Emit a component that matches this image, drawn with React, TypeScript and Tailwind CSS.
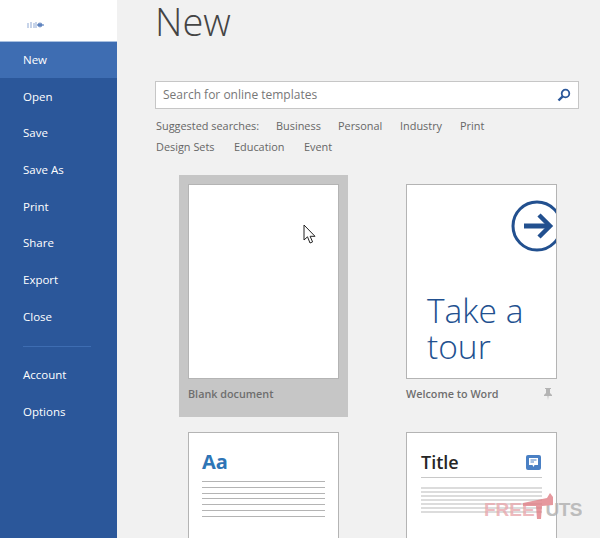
import React from 'react';

const font = "font-['Open_Sans','Noto_Sans',sans-serif]";

const topItems = ['Open', 'Save', 'Save As', 'Print', 'Share', 'Export', 'Close'];
const bottomItems = ['Account', 'Options'];

const Sidebar: React.FC = () => (
  <aside className="w-[117px] shrink-0 bg-[#2b579a] text-white text-[11.5px]">
    <div className="h-[42px] bg-white border-b border-[#a9c0e0] flex items-center pl-[27px] pt-[8px]">
      <svg width="18" height="8" viewBox="0 0 18 8">
        <path d="M1 2v5M4 1v6M7 2v5M9 1v6" stroke="#8fa9d4" strokeWidth="1" />
        <circle cx="13" cy="4" r="2.4" fill="#7f9bcb" />
        <path d="M10 4h7" stroke="#3e6db2" strokeWidth="1" />
      </svg>
    </div>
    <div className="h-[36px] bg-[#3e6db2] flex items-center pl-[23px]">New</div>
    {topItems.map((item) => (
      <div key={item} className="h-[36.67px] flex items-center pl-[23px]">
        {item}
      </div>
    ))}
    <div className="h-px bg-[#3e6db2] ml-[23px] w-[68px] mt-[11px] mb-[10px]" />
    {bottomItems.map((item) => (
      <div key={item} className="h-[36.67px] flex items-center pl-[23px]">
        {item}
      </div>
    ))}
  </aside>
);

const SearchIcon = () => (
  <svg width="14" height="14" viewBox="0 0 14 14" fill="none" stroke="#2b579a">
    <circle cx="8.5" cy="5.5" r="3.8" strokeWidth="1.8" />
    <path d="M5.7 8.3L1.5 12.5" strokeWidth="2.4" />
  </svg>
);

const PinIcon = () => (
  <svg width="10" height="12" viewBox="0 0 10 12" fill="#b4b4b4">
    <path d="M2 0h6v1H7v4l2 2v1H5.5L5 12l-.5-4H1V7l2-2V1H2z" />
  </svg>
);

const Cursor = () => (
  <svg className="absolute left-[114px] top-[39px]" width="14" height="21" viewBox="0 0 14 21">
    <path
      d="M1 1v15l3.5-3.2L7 19l2.6-1.1-2.5-5.6H12z"
      fill="white"
      stroke="#222"
      strokeWidth="1"
      strokeLinejoin="miter"
    />
  </svg>
);

const Sheet: React.FC<{ children?: React.ReactNode; className?: string }> = ({ children, className }) => (
  <div className={`relative w-[151px] bg-white border border-[#b4b4b4] overflow-hidden ${className ?? ''}`}>
    {children}
  </div>
);

const Watermark = () => (
  <div className="absolute left-[484px] top-[496px] w-[98px] flex justify-between opacity-80 font-['Liberation_Sans',sans-serif] font-bold text-[19px] leading-[28px]">
    <span className="text-[#e9a9ae]">FREE</span>
    <span className="text-[#b0b0b0] tracking-[-0.5px]">UTS</span>
    <svg className="absolute left-[39px] -top-[3px]" width="30" height="26" viewBox="0 0 30 26">
      <path d="M0 10L24 5l3-5 3 4v8l-11 1-1 13h-4l-1-13H0z" fill="#e07f86" />
    </svg>
  </div>
);

const App: React.FC = () => (
  <div className={`relative w-[600px] h-[538px] overflow-hidden flex bg-[#f1f1f1] ${font}`}>
    <Sidebar />
    <main className="flex-1 pl-[38px] min-w-0">
      <h1 className="font-light text-[38px] leading-[42px] text-[#444444] h-[81px]">New</h1>
      <div className="w-[424px] h-[28px] bg-white border border-[#c6c6c6] flex items-center justify-between pl-[7px] pr-[7px] text-[12px] text-[#777777]">
        <span>Search for online templates</span>
        <SearchIcon />
      </div>
      <div className="mt-[6px] ml-[1px] text-[10.9px] text-[#666666] leading-[21px]">
        <div className="flex">
          <span className="w-[120px]">Suggested searches:</span>
          <span className="w-[62px]">Business</span>
          <span className="w-[62px]">Personal</span>
          <span className="w-[60px]">Industry</span>
          <span>Print</span>
        </div>
        <div className="flex">
          <span className="w-[78px]">Design Sets</span>
          <span className="w-[70px]">Education</span>
          <span>Event</span>
        </div>
      </div>
      <div className="mt-[18px] ml-[24px] grid grid-cols-[169px_169px] gap-x-[49px] gap-y-[6px] text-[10.8px] font-semibold text-[#6e6e6e]">
        <div className="relative h-[242px] bg-[#c6c6c6] p-[9px]">
          <Sheet className="h-[195px]">
            <Cursor />
          </Sheet>
          <div className="mt-[7px]">Blank document</div>
        </div>
        <div className="h-[242px] p-[9px]">
          <Sheet className="h-[195px]">
            <svg className="absolute left-[104px] top-[15px]" width="50" height="52" viewBox="0 0 50 52" fill="none" stroke="#22508f">
              <circle cx="26" cy="26" r="24" strokeWidth="3" />
              <path d="M13 26h26" strokeWidth="5" />
              <path d="M28 15l11 11-11 11" strokeWidth="4.5" />
            </svg>
            <div className="absolute left-[20px] top-[108px] font-light text-[33.5px] leading-[35.5px] text-[#22508f] whitespace-nowrap">
              Take a
              <br />
              tour
            </div>
          </Sheet>
          <div className="mt-[7px] flex items-center justify-between pr-[4px]">
            <span>Welcome to Word</span>
            <PinIcon />
          </div>
        </div>
        <div className="px-[9px] pt-[9px]">
          <Sheet className="h-[120px] px-[13px] pt-[16px]">
            <div className="text-[20px] leading-[26px] font-bold text-[#2e75b6]">Aa</div>
            <div className="mt-[6px] flex flex-col gap-[4.8px]">
              {[0, 1, 2, 3, 4, 5, 6].map((i) => (
                <div key={i} className="h-px bg-[#b4b4b4]" />
              ))}
            </div>
          </Sheet>
        </div>
        <div className="px-[9px] pt-[9px]">
          <Sheet className="h-[120px] px-[14px] pt-[16px]">
            <div className="flex items-center justify-between pr-[1px]">
              <span className="text-[18px] leading-[26px] font-semibold text-[#262626]">Title</span>
              <div className="w-[15px] h-[15px] rounded-[2px] bg-[#4a80c4] flex items-center justify-center">
                <svg width="11" height="11" viewBox="0 0 11 11">
                  <path d="M1 1h9v7H6.5L5.5 10 4.5 8H1z" fill="white" />
                  <path d="M2.5 3h6M2.5 5h3.5" stroke="#4a80c4" strokeWidth="1" />
                </svg>
              </div>
            </div>
            <div className="h-px bg-[#c8c8c8] mt-[2px] mb-[9px]" />
            <div className="flex flex-col gap-[2px]">
              {[0, 1, 2, 3, 4, 5, 6].map((i) => (
                <div key={i} className="h-[2px] bg-[#dcdcdc]" />
              ))}
            </div>
          </Sheet>
        </div>
      </div>
    </main>
    <Watermark />
  </div>
);

export default App;
